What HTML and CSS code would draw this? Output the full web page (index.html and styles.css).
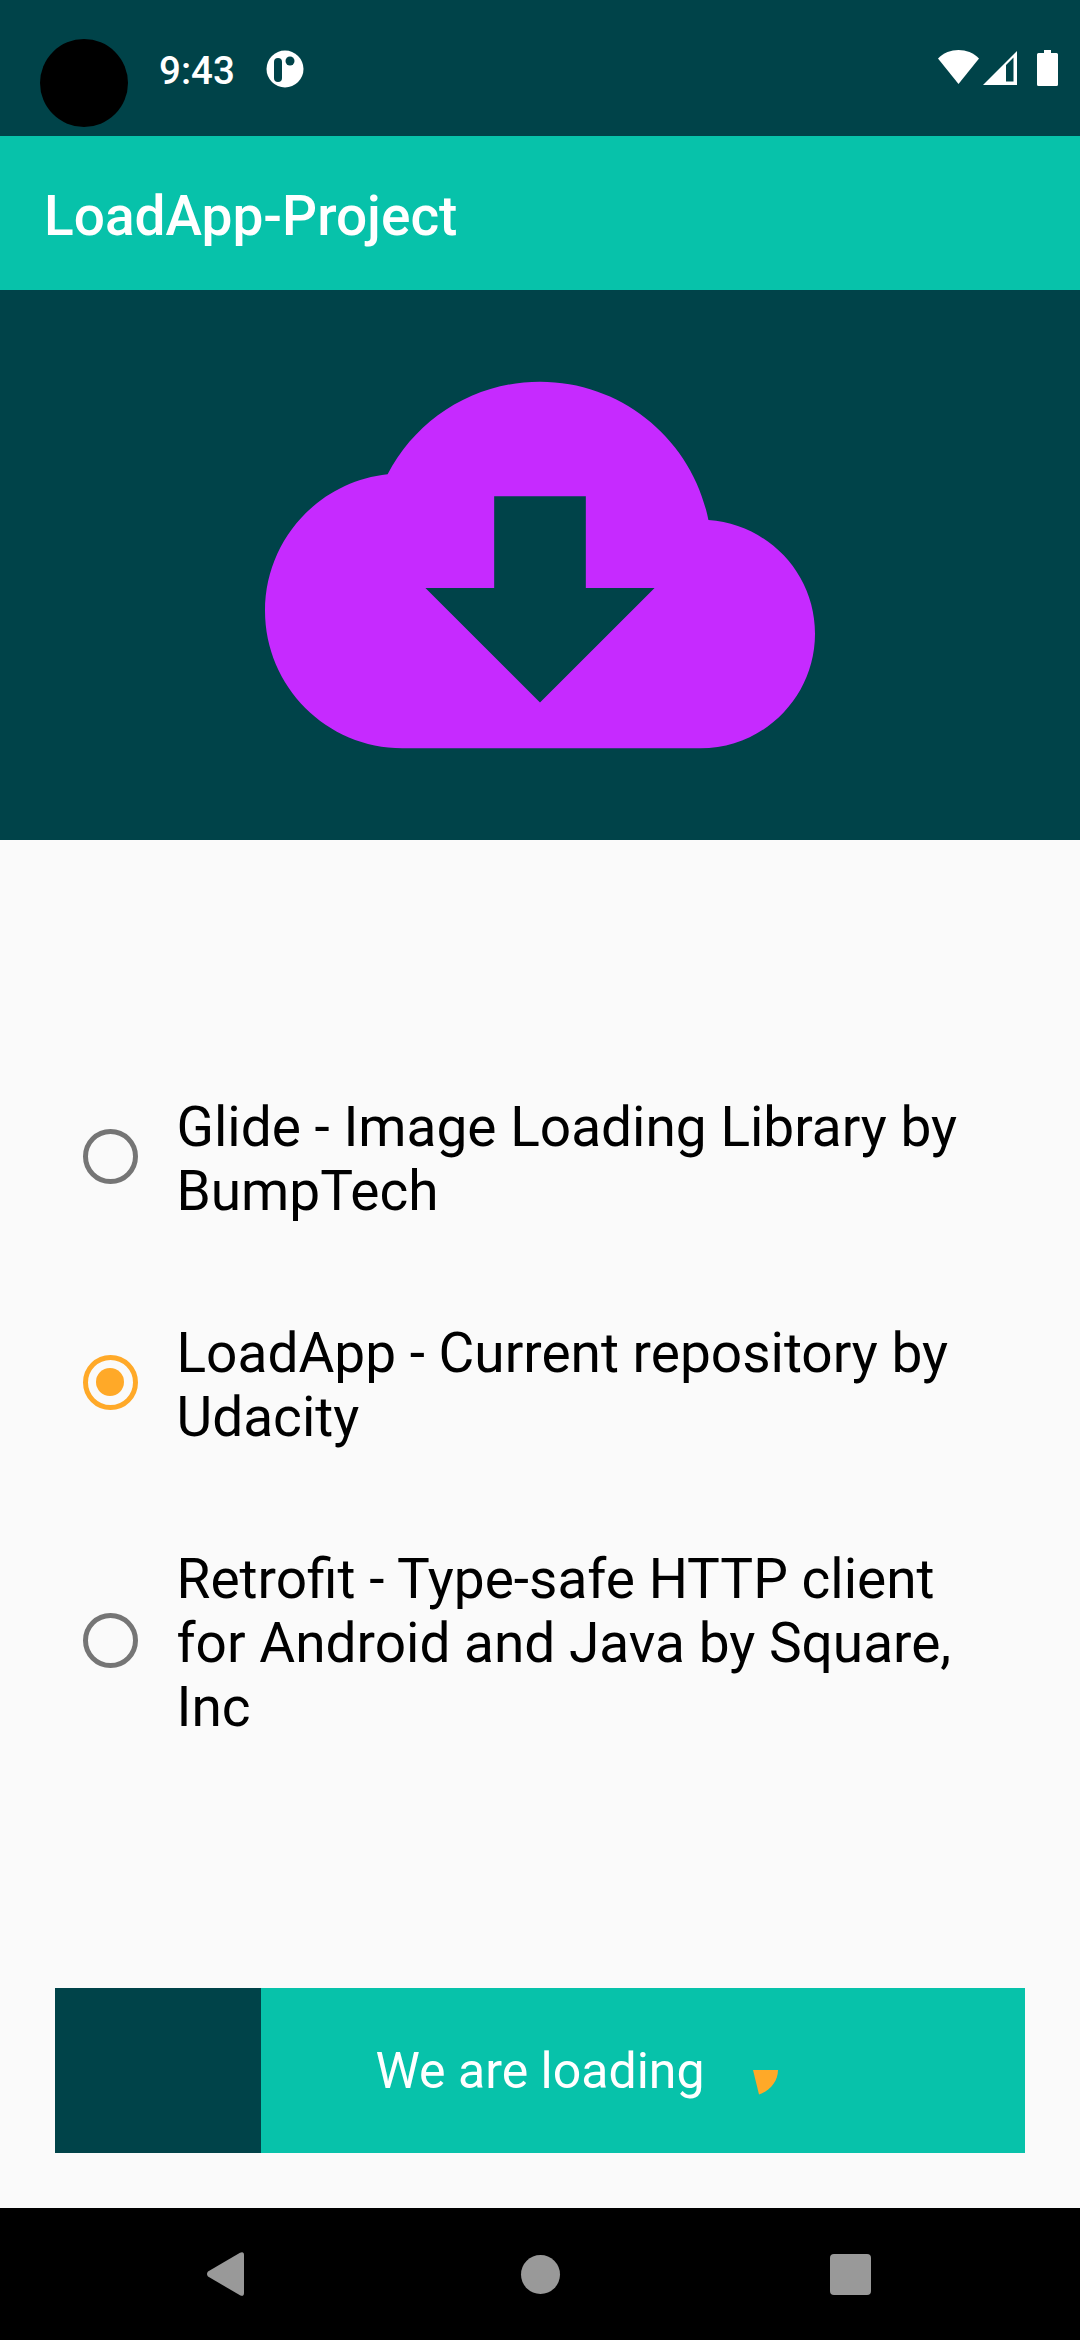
FILE: index.html
```html
<!DOCTYPE html>
<html lang="en">
<head>
<meta charset="utf-8">
<title>LoadApp-Project</title>
<link rel="stylesheet" href="styles.css">
</head>
<body>
<div class="screen">
  <header class="status-bar">
    <div class="status-left">
      <span class="camera"></span>
      <span class="time">9:43</span>
      <svg class="notif" viewBox="0 0 38 38"><circle cx="19" cy="19" r="18.5" fill="#fff"/><rect x="8" y="8" width="8" height="24" rx="4" fill="#004349"/><circle cx="24" cy="11" r="4.5" fill="#004349"/></svg>
    </div>
    <div class="status-right">
      <svg class="wifi" viewBox="0 0 41 34"><path d="M0 8.5C11 -2.8 30 -2.8 41 8.5L20.5 34Z" fill="#fff"/></svg>
      <svg class="signal" viewBox="0 0 34 34"><path fill-rule="evenodd" d="M0 34L34 0V34ZM23 14V30.5H30.5V6.5Z" fill="#fff"/></svg>
      <svg class="battery" viewBox="0 0 21 36"><path d="M7 0H14V3H19.5Q21 3 21 4.5V34.5Q21 36 19.5 36H1.5Q0 36 0 34.5V4.5Q0 3 1.5 3H7Z" fill="#fff"/></svg>
    </div>
  </header>
  <div class="app-bar">LoadApp-Project</div>
  <div class="hero">
    <svg class="cloud" viewBox="0 0 24 24"><path d="M19.35 10.04C18.67 6.59 15.64 4 12 4 9.11 4 6.6 5.64 5.35 8.04 2.34 8.36 0 10.91 0 14c0 3.31 2.69 6 6 6h13c2.76 0 5-2.24 5-5 0-2.64-2.05-4.78-4.65-4.96zM17 13l-5 5-5-5h3V9h4v4h3z" fill="#c62aff"/></svg>
  </div>
  <main class="content">
    <div class="options">
      <div class="option"><span class="radio"></span><span class="label">Glide - Image Loading Library by BumpTech</span></div>
      <div class="option"><span class="radio radio-on"></span><span class="label">LoadApp - Current repository by Udacity</span></div>
      <div class="option"><span class="radio"></span><span class="label">Retrofit - Type-safe HTTP client for Android and Java by Square, Inc</span></div>
    </div>
    <div class="button">
      <span class="button-progress"></span>
      <span class="button-text">We are loading</span>
      <svg class="spinner" viewBox="0 0 25 25"><path d="M0 0H25C25 11 17 21 6 24.5Z" fill="#ffa928"/></svg>
    </div>
  </main>
  <nav class="nav-bar">
    <svg class="nav-back" viewBox="0 0 37 44"><path d="M1 19.500L33 0.700Q37 -1 37 3V41Q37 45 33 43.300L1 24.500Q-1 22 1 19.500Z" fill="#999"/></svg>
    <span class="nav-home"></span>
    <span class="nav-recent"></span>
  </nav>
</div>
</body>
</html>
```
FILE: styles.css
```css
* { box-sizing: border-box; }
html, body { margin: 0; padding: 0; }
body { font-family: Roboto, "Liberation Sans", sans-serif; background: #fafafa; }
.screen { width: 1080px; height: 2340px; display: flex; flex-direction: column; overflow: hidden; }

.status-bar { height: 136px; background: #004349; display: flex; justify-content: space-between; padding: 39px 22px 0 40px; flex: none; }
.status-left { display: flex; align-items: flex-start; }
.camera { width: 88px; height: 88px; border-radius: 50%; background: #000; }
.time { color: #fff; font-size: 38.5px; font-weight: 500; line-height: 45px; margin-left: 31px; margin-top: 9px; }
.notif { width: 38px; height: 38px; margin-left: 31px; margin-top: 11px; }
.status-right { display: flex; align-items: flex-start; margin-top: 11px; }
.wifi { width: 41px; height: 34px; }
.signal { width: 34px; height: 34px; margin-left: 4px; margin-top: 1px; }
.battery { width: 21px; height: 36px; margin-left: 20px; }

.app-bar { height: 154px; background: #07c2aa; color: #fff; font-size: 55px; font-weight: 500; line-height: 148px; padding: 6px 0 0 44px; flex: none; }
.hero { height: 550px; background: #004349; display: flex; justify-content: center; flex: none; }
.cloud { width: 550px; height: 550px; display: block; }

.content { flex: 1; display: flex; flex-direction: column; padding: 0 55px 55px; justify-content: space-between; }
.options { display: flex; flex-direction: column; gap: 98px; padding-top: 252px; padding-left: 27.5px; padding-right: 30px; }
.option { display: flex; align-items: center; gap: 39px; }
.radio { width: 55px; height: 55px; border-radius: 50%; border: 5.5px solid #757575; flex: none; }
.radio-on { border-color: #ffa928; position: relative; }
.radio-on::after { content: ""; position: absolute; inset: 8.25px; border-radius: 50%; background: #ffa928; }
.label { font-size: 55px; line-height: 64px; color: #000; padding-top: 3px; margin-bottom: -3px; }

.button { height: 165px; background: #07c2aa; position: relative; display: flex; align-items: center; justify-content: center; }
.button-progress { position: absolute; left: 0; top: 0; bottom: 0; width: 206px; background: #004349; }
.button-text { position: relative; color: #fff; font-size: 50px; }
.spinner { position: absolute; left: 698px; top: 82px; width: 25px; height: 25px; }

.nav-bar { height: 132px; background: #000; display: flex; align-items: center; flex: none; padding-left: 207px; }
.nav-back { width: 37px; height: 44px; }
.nav-home { width: 39px; height: 39px; border-radius: 50%; background: #999; margin-left: 277px; }
.nav-recent { width: 41px; height: 41px; border-radius: 4px; background: #999; margin-left: 270px; }
```
